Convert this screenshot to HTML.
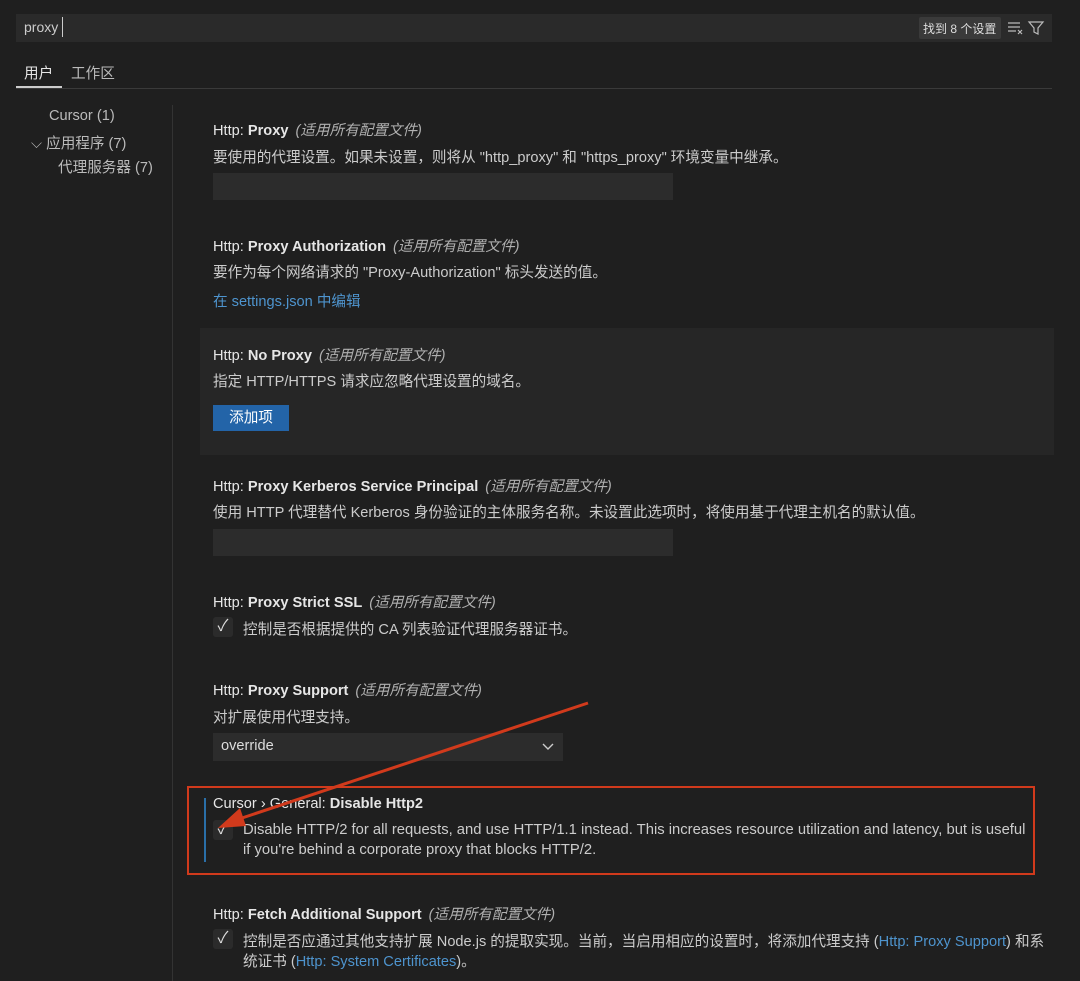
<!DOCTYPE html>
<html><head><meta charset="utf-8"><style>
body{margin:0;width:1080px;height:981px;background:#1f1f1f;font-family:"Liberation Sans","Noto Sans CJK SC",sans-serif;color:#cccccc;font-size:14.6px;position:relative;overflow:hidden}
.a{position:absolute;white-space:nowrap}
.t{color:#cccccc}.t b{color:#e6e6e6;font-weight:bold}.t i{color:#b0b0b0;margin-left:7px}
.inp{position:absolute;background:#2c2c2c;height:27px}
.cb{position:absolute;width:20px;height:20px;background:#2b2b2b;border-radius:3px;color:#ddd;font-size:16px;line-height:20px;text-align:center}
.lnk{color:#4e94ce}
</style></head><body>
<div class="a" style="left:16px;top:14px;width:1036px;height:28px;background:#2a2a2a"></div>
<div class="a" style="left:24px;top:19px;font-size:14px;color:#ccc">proxy</div>
<div class="a" style="left:62px;top:17px;width:1px;height:20px;background:#ccc"></div>
<div class="a" style="left:919px;top:17px;width:82px;height:22px;background:#3a3a3a;border-radius:2px"></div>
<div class="a" style="left:923px;top:20px;font-size:12px;color:#ddd">找到 8 个设置</div>
<svg class="a" style="left:1007px;top:20px" width="42" height="16"><g stroke="#bbb" fill="none" stroke-width="1.2"><path d="M1 3h12M1 7h12M1 11h8M11 10l4 4M15 10l-4 4"/><path d="M22 2h14l-5 6v6l-4-2V8z"/></g></svg>
<div class="a" style="left:24px;top:62px;color:#e6e6e6">用户</div>
<div class="a" style="left:71px;top:62px;color:#bbb">工作区</div>
<div class="a" style="left:16px;top:88px;width:1036px;height:1px;background:#3a3a3a"></div>
<div class="a" style="left:16px;top:86px;width:46px;height:2px;background:#ccc"></div>
<div class="a" style="left:49px;top:108px;color:#bbb">Cursor (1)</div>
<div class="a" style="left:31px;top:132px;color:#bbb">⌵ 应用程序 (7)</div>
<div class="a" style="left:58px;top:156px;color:#bbb">代理服务器 (7)</div>
<div class="a" style="left:172px;top:105px;width:1px;height:876px;background:#333"></div>

<div class="a t" style="left:213px;top:119px"><b><span style="font-weight:normal">Http: </span>Proxy</b><i>(适用所有配置文件)</i></div>
<div class="a t" style="left:213px;top:146px">要使用的代理设置。如果未设置，则将从 "http_proxy" 和 "https_proxy" 环境变量中继承。</div>
<div class="inp" style="left:213px;top:173px;width:460px"></div>

<div class="a t" style="left:213px;top:235px"><b><span style="font-weight:normal">Http: </span>Proxy Authorization</b><i>(适用所有配置文件)</i></div>
<div class="a t" style="left:213px;top:261px">要作为每个网络请求的 "Proxy-Authorization" 标头发送的值。</div>
<div class="a lnk" style="left:213px;top:290px">在 settings.json 中编辑</div>

<div class="a" style="left:200px;top:328px;width:854px;height:127px;background:#262626"></div>
<div class="a t" style="left:213px;top:344px"><b><span style="font-weight:normal">Http: </span>No Proxy</b><i>(适用所有配置文件)</i></div>
<div class="a t" style="left:213px;top:370px">指定 HTTP/HTTPS 请求应忽略代理设置的域名。</div>
<div class="a" style="left:213px;top:405px;width:76px;height:26px;background:#2364a8;color:#fff;text-align:center;line-height:26px">添加项</div>

<div class="a t" style="left:213px;top:475px"><b><span style="font-weight:normal">Http: </span>Proxy Kerberos Service Principal</b><i>(适用所有配置文件)</i></div>
<div class="a t" style="left:213px;top:501px">使用 HTTP 代理替代 Kerberos 身份验证的主体服务名称。未设置此选项时，将使用基于代理主机名的默认值。</div>
<div class="inp" style="left:213px;top:529px;width:460px"></div>

<div class="a t" style="left:213px;top:591px"><b><span style="font-weight:normal">Http: </span>Proxy Strict SSL</b><i>(适用所有配置文件)</i></div>
<div class="cb" style="left:213px;top:617px">✓</div>
<div class="a t" style="left:243px;top:618px">控制是否根据提供的 CA 列表验证代理服务器证书。</div>

<div class="a t" style="left:213px;top:679px"><b><span style="font-weight:normal">Http: </span>Proxy Support</b><i>(适用所有配置文件)</i></div>
<div class="a t" style="left:213px;top:706px">对扩展使用代理支持。</div>
<div class="a" style="left:213px;top:733px;width:350px;height:28px;background:#2c2c2c"></div>
<div class="a" style="left:221px;top:738px;color:#ddd">override</div>
<svg class="a" style="left:541px;top:742px" width="14" height="10"><path d="M2 2l5 5 5-5" stroke="#ccc" fill="none" stroke-width="1.4"/></svg>

<div class="a" style="left:187px;top:786px;width:844px;height:85px;border:2px solid #d13a1c"></div>
<div class="a" style="left:204px;top:798px;width:2px;height:64px;background:#2a6fa8"></div>
<div class="a t" style="left:213px;top:796px"><b><span style="font-weight:normal">Cursor › General: </span>Disable Http2</b></div>
<div class="cb" style="left:213px;top:820px">✓</div>
<div class="a t" style="left:243px;top:822px;font-size:14.8px">Disable HTTP/2 for all requests, and use HTTP/1.1 instead. This increases resource utilization and latency, but is useful</div>
<div class="a t" style="left:243px;top:842px;font-size:14.8px">if you're behind a corporate proxy that blocks HTTP/2.</div>

<div class="a t" style="left:213px;top:903px"><b><span style="font-weight:normal">Http: </span>Fetch Additional Support</b><i>(适用所有配置文件)</i></div>
<div class="cb" style="left:213px;top:929px">✓</div>
<div class="a t" style="left:243px;top:930px">控制是否应通过其他支持扩展 Node.js 的提取实现。当前，当启用相应的设置时，将添加代理支持 (<span class="lnk">Http: Proxy Support</span>) 和系</div>
<div class="a t" style="left:243px;top:950px">统证书 (<span class="lnk">Http: System Certificates</span>)。</div>

<svg class="a" style="left:0;top:0" width="1080" height="981"><line x1="588" y1="703" x2="236" y2="820" stroke="#d13a1c" stroke-width="3"/><polygon points="218,828 240,808 246,826" fill="#d13a1c"/></svg>
</body></html>
